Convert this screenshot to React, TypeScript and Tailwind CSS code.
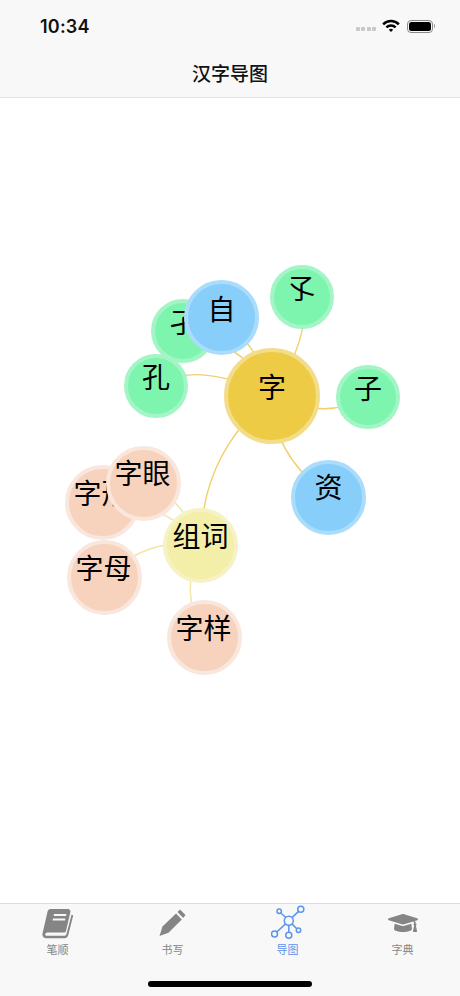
import { FaGraduationCap } from "react-icons/fa";

const CJK = "font-['PingFang_SC','Noto_Sans_CJK_SC',sans-serif]";

const nodes = [
  { t: "字形", c: "left-[65px] top-[465px] w-[75px] h-[75px] pb-[21px] pr-[2px] bg-[#f7d3bd] border-[#f9e6dc]" },
  { t: "字眼", c: "left-[106px] top-[446px] w-[75px] h-[75px] pb-[23px] pr-[2px] bg-[#f7d3bd] border-[#f9e6dc]" },
  { t: "字母", c: "left-[67px] top-[540px] w-[75px] h-[75px] pb-[22px] pr-[2px] bg-[#f7d3bd] border-[#f9e6dc]" },
  { t: "字样", c: "left-[167px] top-[600px] w-[75px] h-[75px] pb-[22px] pr-[2px] bg-[#f7d3bd] border-[#f9e6dc]" },
  { t: "组词", c: "left-[163px] top-[508px] w-[75px] h-[75px] pb-[22px] bg-[#f3eea8] border-[#f6f2c4]" },
  { t: "孑", c: "left-[151px] top-[299px] w-[64px] h-[64px] pb-[20px] bg-[#7df5ae] border-[#a3f5c6]" },
  { t: "孔", c: "left-[124px] top-[354px] w-[64px] h-[64px] pb-[20px] bg-[#7df5ae] border-[#a3f5c6]" },
  { t: "孓", c: "left-[270px] top-[265px] w-[64px] h-[64px] pb-[21px] pr-[2px] bg-[#7df5ae] border-[#a3f5c6]" },
  { t: "子", c: "left-[336px] top-[365px] w-[64px] h-[64px] pb-[20px] bg-[#7df5ae] border-[#a3f5c6]" },
  { t: "资", c: "left-[291px] top-[460px] w-[75px] h-[75px] pb-[23px] bg-[#87cefa] border-[#aadcfb]" },
  { t: "字", c: "left-[224px] top-[348px] w-[96px] h-[96px] pb-[21px] bg-[#eecb45] border-[#f3dc8a]" },
  { t: "自", c: "left-[184px] top-[280px] w-[75px] h-[75px] pb-[20px] bg-[#87cefa] border-[#aadcfb]" },
];

function BookIcon() {
  return (
    <svg width="32" height="31" viewBox="0 0 32 31">
      <path
        fill="currentColor"
        d="M8.5 1H26a2.5 2.5 0 0 1 2.4 3L24 23a2 2 0 0 1-2 1.600H6.200c-1.600 0-2.800.7-3 1.700-.2.9.6 1.500 1.800 1.500h17.400c1 0 1.700-.6 2-1.500L29.600 6.500l1.600 1-5 19.800c-.4 1.700-1.800 2.900-3.600 2.900H4.400C1.600 30.200-.2 28.200.6 25L5.600 3.400C6 1.900 7 1 8.500 1z"
      />
      <path d="M11.800 7H24.200M10.800 11.500H23.200" stroke="#f8f8f8" strokeWidth="2.200" fill="none" />
    </svg>
  );
}

function PencilIcon() {
  return (
    <svg width="27" height="28" viewBox="0 0 27 28" fill="currentColor">
      <path d="M0.500 27 3.500 17.500 17 4.500 22.800 10.500 9.500 23.800z" />
      <path d="M18.500 3 21 0.500 26.500 6 24.200 9z" />
    </svg>
  );
}

function NetworkIcon() {
  return (
    <svg width="34" height="36" viewBox="0 0 34 36" fill="none" stroke="currentColor" strokeWidth="1.500">
      <circle cx="17.800" cy="15.700" r="4.500" />
      <circle cx="29.800" cy="4.300" r="3" />
      <circle cx="8.200" cy="6.300" r="2.200" />
      <circle cx="3.500" cy="29" r="3" />
      <circle cx="17.800" cy="30.300" r="3" />
      <circle cx="27.500" cy="25.300" r="2.200" />
      <path d="M21 12.600 27.600 6.400M14.800 12.500 9.800 8M14.600 18.900 5.700 27M17.800 20.200V27.300M21 18.900 25.800 23.700" />
    </svg>
  );
}

const tabs = [
  { t: "笔顺", i: <BookIcon />, a: false },
  { t: "书写", i: <PencilIcon />, a: false },
  { t: "导图", i: <NetworkIcon />, a: true },
  { t: "字典", i: <FaGraduationCap className="w-[30px] h-[28px] -scale-x-100" />, a: false },
];

export default function App() {
  return (
    <div className={`w-[460px] h-[996px] flex flex-col bg-white overflow-hidden ${CJK}`}>
      <header className="h-[98px] shrink-0 bg-[#f8f8f8] border-b border-[#e2e2e2] flex flex-col">
        <div className="h-[52px] shrink-0 flex items-center justify-between pl-[40px] pr-[25px]">
          <span className="text-[18px] font-semibold text-[#111] font-['Inter',sans-serif] tracking-[0.2px]">10:34</span>
          <div className="flex items-center">
            <div className="flex gap-[1.500px] mr-[6px] mt-[6px]">
              <span className="w-[4px] h-[4px] rounded-[1px] bg-[#c9c9c9]" />
              <span className="w-[4px] h-[4px] rounded-[1px] bg-[#c9c9c9]" />
              <span className="w-[4px] h-[4px] rounded-[1px] bg-[#c9c9c9]" />
              <span className="w-[4px] h-[4px] rounded-[1px] bg-[#c9c9c9]" />
            </div>
            <svg width="18" height="14" viewBox="0 0 19 14" className="mr-[7px]" fill="none" stroke="#000" strokeWidth="2.600">
              <path d="M1.200 5.200a11.600 11.600 0 0 1 16.600 0" />
              <path d="M4.600 8.400a7 7 0 0 1 9.800 0" />
              <path d="M9.500 13.400 7.200 11a3.200 3.200 0 0 1 4.600 0z" fill="#000" stroke="none" />
            </svg>
            <div className="w-[26px] h-[13px] rounded-[4px] border border-[#8a8a8a] p-[1px]">
              <div className="w-full h-full rounded-[2.500px] bg-black" />
            </div>
            <div className="w-[1.500px] h-[4px] bg-[#999] rounded-r-sm ml-[0.500px]" />
          </div>
        </div>
        <h1 className="flex-1 flex items-center justify-center pb-[2px] text-[19px] font-medium text-[#111]">汉字导图</h1>
      </header>

      <main className="flex-1 relative">
        <svg width="460" height="996" className="absolute left-0 top-[-98px]" fill="none" stroke="#efd06c" strokeWidth="1.400">
          <path d="M156 386Q195 359 272 396" />
          <path d="M272 396Q248 345 183 331" />
          <path d="M272 390C265 365 250 342 222 317" />
          <path d="M302 297Q312 335 272 396" />
          <path d="M272 396Q325 421 368 397" />
          <path d="M272 396Q270 450 328 497" />
          <path d="M272 396Q200 455 201 546" />
          <path d="M143 483Q182 495 201 546" stroke="#f2e6a4" />
          <path d="M103 503Q165 500 201 546" stroke="#f2e6a4" />
          <path d="M104 578Q150 535 201 546" stroke="#f2e6a4" />
          <path d="M201 546Q178 590 204 637" stroke="#f2e6a4" />
        </svg>
        {nodes.map((n, i) => (
          <div
            key={i}
            className={`absolute mt-[-98px] rounded-full border-[4px] flex items-center justify-center text-[28px] leading-[36px] text-black whitespace-nowrap ${n.c}`}
          >
            {n.t}
          </div>
        ))}
      </main>

      <nav className="h-[93px] shrink-0 bg-[#f8f8f8] border-t border-[#dcdcdc] relative">
        <div className="grid grid-cols-4">
          {tabs.map((tab) => (
            <div key={tab.t} className={`flex flex-col items-center ${tab.a ? "text-[#5b94ea]" : "text-[#858585]"}`}>
              <div className="h-[38px] flex items-center justify-center">{tab.i}</div>
              <span className="text-[11px] leading-[14px]">{tab.t}</span>
            </div>
          ))}
        </div>
        <div className="absolute left-[148px] bottom-[9px] w-[164px] h-[6px] rounded-full bg-black" />
      </nav>
    </div>
  );
}
